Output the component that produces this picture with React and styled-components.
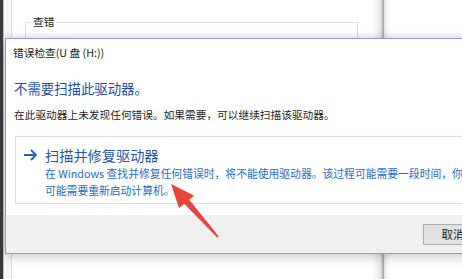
import React from 'react';
import styled, { createGlobalStyle } from 'styled-components';

const GlobalStyle = createGlobalStyle`
  html, body {
    margin: 0;
    padding: 0;
    width: 462px;
    height: 279px;
    overflow: hidden;
    background: #ffffff;
  }
  body {
    font-family: "Noto Sans CJK SC", "Noto Sans", "Liberation Sans", sans-serif;
  }
`;

const Screen = styled.div`
  position: relative;
  display: flex;
  width: 462px;
  height: 279px;
  overflow: hidden;
`;

const DarkEdge = styled.div`
  width: 3px;
  background: #3a3a3c;
  border-right: 1px solid #bdbdbd;
`;

const BackWindow = styled.div`
  flex: 1;
  display: flex;
  background: #fdfdfd;
`;

const Gutter = styled.div`
  width: 7px;
  background: #f7f7f7;
`;

const TabPage = styled.div`
  width: 360px;
  border-left: 1px solid #dedede;
  background: #ffffff;
`;

const GroupBox = styled.fieldset`
  margin: 15px 0 0 13px;
  width: 333px;
  height: 60px;
  padding: 0;
  border: 1px solid #dcdcdc;
  box-sizing: border-box;
`;

const Legend = styled.legend`
  margin-left: 5px;
  padding: 0 2px;
  font-size: 10.7px;
  line-height: 14px;
  color: #1a1a1a;
`;

const ScrollShade = styled.div`
  width: 18px;
  background: linear-gradient(
    to right,
    #ffffff 0%,
    #eeeeee 40%,
    #d2d2d2 55%,
    #9a9a9a 62%,
    #e6e6e6 70%,
    #f7f7f7 85%,
    #ffffff 100%
  );
`;

const RestPane = styled.div`
  flex: 1;
  background: #ffffff;
`;

/* dialog window sits on top of the properties window */
const Dialog = styled.div`
  position: absolute;
  left: 5px;
  top: 38px;
  width: 504px;
  height: 216px;
  box-sizing: border-box;
  border: 1px solid #a68ecb;
  background: #ffffff;
  display: flex;
  flex-direction: column;
  box-shadow: 0 -3px 6px rgba(150, 120, 200, 0.18), 0 4px 10px rgba(0, 0, 0, 0.18);
`;

const TitleBar = styled.div`
  height: 27px;
  line-height: 27px;
  padding-left: 7px;
  font-size: 10.7px;
  color: #1a1a1a;
`;

const Content = styled.div`
  flex: 1;
  padding: 12px 0 0 8px;
`;

const Heading = styled.div`
  font-size: 13.4px;
  line-height: 20px;
  color: #1f4ea8;
`;

const Message = styled.div`
  margin-top: 9px;
  font-size: 10.7px;
  line-height: 16px;
  color: #262626;
  white-space: nowrap;
`;

const CommandLink = styled.div`
  margin: 13px 0 0 1px;
  border: 1px solid #d5e0ea;
  padding: 8px 0 4px 7px;
  display: flex;
  align-items: flex-start;
  gap: 8px;
`;

const ArrowIcon = styled.svg`
  flex: none;
  margin-top: 4px;
`;

const LinkText = styled.div`
  display: flex;
  flex-direction: column;
`;

const LinkTitle = styled.div`
  font-size: 14.2px;
  line-height: 20px;
  color: #1f56b3;
`;

const LinkNote = styled.div`
  font-size: 10.8px;
  line-height: 17px;
  color: #2a6bcb;
  white-space: nowrap;
`;

const Footer = styled.div`
  height: 38px;
  background: #f0f0f0;
  display: flex;
  justify-content: flex-end;
  align-items: center;
  padding-right: 25px;
`;

const Button = styled.div`
  width: 60px;
  height: 21px;
  box-sizing: border-box;
  border: 1px solid #adadad;
  background: #e1e1e1;
  font-size: 11.5px;
  line-height: 19px;
  text-align: center;
  color: #1a1a1a;
`;

const Pointer = styled.svg`
  position: absolute;
  left: 0;
  top: 0;
  pointer-events: none;
`;

export default function App() {
  return (
    <>
      <GlobalStyle />
      <Screen>
        <DarkEdge />
        <BackWindow>
          <Gutter />
          <TabPage>
            <GroupBox>
              <Legend>查错</Legend>
            </GroupBox>
          </TabPage>
          <ScrollShade />
          <RestPane />
        </BackWindow>

        <Dialog>
          <TitleBar>错误检查(U 盘 (H:))</TitleBar>
          <Content>
            <Heading>不需要扫描此驱动器。</Heading>
            <Message>在此驱动器上未发现任何错误。如果需要，可以继续扫描该驱动器。</Message>
            <CommandLink>
              <ArrowIcon width="14" height="12" viewBox="0 0 14 12">
                <path d="M1 6 H13 M8 1 L13 6 L8 11" fill="none" stroke="#1f5fc2" strokeWidth="1.8" />
              </ArrowIcon>
              <LinkText>
                <LinkTitle>扫描并修复驱动器</LinkTitle>
                <LinkNote>在 Windows 查找并修复任何错误时，将不能使用驱动器。该过程可能需要一段时间，你</LinkNote>
                <LinkNote>可能需要重新启动计算机。</LinkNote>
              </LinkText>
            </CommandLink>
          </Content>
          <Footer>
            <Button>取消</Button>
          </Footer>
        </Dialog>

        <Pointer width="462" height="279" viewBox="0 0 462 279">
          <polygon
            points="171,184 194,195.5 189.3,199.8 218.8,236.4 217.2,237.6 184.2,203.8 179,208"
            fill="#e8443c"
          />
        </Pointer>
      </Screen>
    </>
  );
}
